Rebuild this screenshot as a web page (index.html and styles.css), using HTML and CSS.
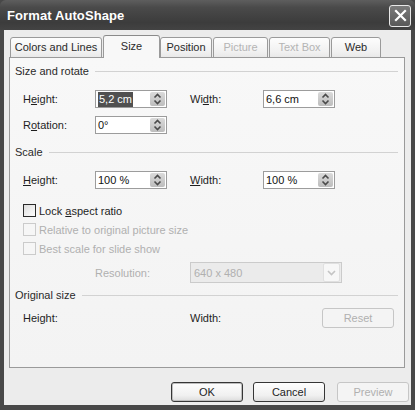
FILE: index.html
```html
<!doctype html>
<html>
<head>
<meta charset="UTF-8" />
<title>Format AutoShape</title>
<link rel="stylesheet" href="styles.css">
</head>
<body>
	<div class="window">
		<div class="titlebar">
			<span class="title">Format AutoShape</span>
			<span class="close">
				<svg width="13" height="13" viewBox="0 0 13 13"><path d="M2 2 L11 11 M11 2 L2 11" stroke="#fff" stroke-width="2.2" stroke-linecap="square"/></svg>
			</span>
		</div>
		<div class="body">
			<div class="tabs">
				<span class="tab tab-colors">Colors and Lines</span>
				<span class="tab tab-size active">Size</span>
				<span class="tab tab-position">Position</span>
				<span class="tab tab-picture disabled">Picture</span>
				<span class="tab tab-textbox disabled">Text Box</span>
				<span class="tab tab-web">Web</span>
			</div>
			<div class="panel">
				<div class="legend legend-rotate">Size and rotate</div>
				<div class="row row-first">
					<label>H<u>e</u>ight:</label>
					<div class="spin"><span class="value"><span class="sel">5,2 cm</span></span><span class="spin-btn"><svg width="9" height="14" viewBox="0 0 9 14"><path d="M1.5 5.5 L4.5 2.5 L7.5 5.5 M1.5 8.5 L4.5 11.5 L7.5 8.5" fill="none" stroke="#4a4a4a" stroke-width="1.6"/></svg></span></div>
					<label>Wi<u>d</u>th:</label>
					<div class="spin"><span class="value">6,6 cm</span><span class="spin-btn"><svg width="9" height="14" viewBox="0 0 9 14"><path d="M1.5 5.5 L4.5 2.5 L7.5 5.5 M1.5 8.5 L4.5 11.5 L7.5 8.5" fill="none" stroke="#4a4a4a" stroke-width="1.6"/></svg></span></div>
				</div>
				<div class="row row-second">
					<label>R<u>o</u>tation:</label>
					<div class="spin"><span class="value">0°</span><span class="spin-btn"><svg width="9" height="14" viewBox="0 0 9 14"><path d="M1.5 5.5 L4.5 2.5 L7.5 5.5 M1.5 8.5 L4.5 11.5 L7.5 8.5" fill="none" stroke="#4a4a4a" stroke-width="1.6"/></svg></span></div>
				</div>
				<div class="legend legend-scale">Scale</div>
				<div class="row row-scale">
					<label><u>H</u>eight:</label>
					<div class="spin"><span class="value">100 %</span><span class="spin-btn"><svg width="9" height="14" viewBox="0 0 9 14"><path d="M1.5 5.5 L4.5 2.5 L7.5 5.5 M1.5 8.5 L4.5 11.5 L7.5 8.5" fill="none" stroke="#4a4a4a" stroke-width="1.6"/></svg></span></div>
					<label><u>W</u>idth:</label>
					<div class="spin"><span class="value">100 %</span><span class="spin-btn"><svg width="9" height="14" viewBox="0 0 9 14"><path d="M1.5 5.5 L4.5 2.5 L7.5 5.5 M1.5 8.5 L4.5 11.5 L7.5 8.5" fill="none" stroke="#4a4a4a" stroke-width="1.6"/></svg></span></div>
				</div>
				<div class="check check-first"><span class="box"></span><span>Lock <u>a</u>spect ratio</span></div>
				<div class="check disabled"><span class="box"></span><span>Relative to original picture size</span></div>
				<div class="check disabled"><span class="box"></span><span>Best scale for slide show</span></div>
				<div class="row row-resolution">
					<span class="label-res">Resolution:</span>
					<div class="select"><span class="value">640 x 480</span><span class="drop"><svg width="9" height="6" viewBox="0 0 9 6"><path d="M1 1 L4.5 4.5 L8 1" fill="none" stroke="#c4c4c4" stroke-width="1.6"/></svg></span></div>
				</div>
				<div class="legend legend-original">Original size</div>
				<div class="row row-original">
					<label>Height:</label>
					<span></span>
					<label>Width:</label>
					<span class="button small disabled">Reset</span>
				</div>
			</div>
			<div class="buttons">
				<span class="button default">OK</span>
				<span class="button">Cancel</span>
				<span class="button disabled">Preview</span>
			</div>
		</div>
	</div>
</body>
</html>
```

FILE: styles.css
```css
html, body, div, span, label{
	margin:0;
	padding:0;
}
body{
	font: 11px "Liberation Sans", Arial, sans-serif;
	color:#1e1e1e;
	background:#4a4a4a;
}
u{
	text-decoration:underline;
	text-underline-offset:1px;
}
.window{
	width:415px;
	height:410px;
	box-sizing:border-box;
	padding:0 4px 5px 4px;
	background:#484848;
	display:flex;
	flex-direction:column;
}
.titlebar{
	height:30px;
	margin:0 -4px;
	padding:0 4px 0 7px;
	display:flex;
	align-items:center;
	justify-content:space-between;
	background:linear-gradient(#5e5e5e, #4a4a4a 25%, #3c3c3c 75%, #434343);
	border-radius:6px 6px 0 0;
}
.title{
	font-weight:bold;
	font-size:13px;
	color:#fff;
	letter-spacing:0.1px;
}
.close{
	width:20px;
	height:20px;
	margin-top:1px;
	border:1px solid #e8e8e8;
	border-radius:3px;
	background:linear-gradient(#7a7a7a, #595959);
	display:flex;
	align-items:center;
	justify-content:center;
}
.body{
	flex:1;
	background:#ececec;
	padding:5px 6px 0 5px;
}
.tabs{
	height:23px;
	margin-bottom:-1px;
	padding-left:1px;
	display:flex;
	align-items:flex-end;
	position:relative;
	z-index:1;
}
.tab{
	height:19px;
	line-height:19px;
	box-sizing:content-box;
	text-align:center;
	border:1px solid #9a9a9a;
	border-radius:3px 3px 0 0;
	background:linear-gradient(#fdfdfd, #f1f1f1 70%, #e9e9e9);
	margin-right:1px;
	color:#2a2a2a;
}
.tab.disabled{
	color:#b4b4b4;
}
.tab-colors{ width:90px; }
.tab-position{ width:50px; margin-left:1px; }
.tab-picture{ width:53px; }
.tab-textbox{ width:59px; }
.tab-web{ width:48px; }
.tab.active{
	width:55px;
	height:22px;
	line-height:21px;
	border-bottom:0;
	margin:0 -1px 0 0;
	background:#f8f8f8;
	border-top-color:#8a8a8a;
}
.panel{
	height:311px;
	box-sizing:border-box;
	border:1px solid #9a9a9a;
	background:linear-gradient(#f8f8f8, #f3f3f3);
	padding:0 6px 0 0;
}
.legend{
	height:14px;
	padding-left:5px;
	display:flex;
	align-items:center;
	gap:6px;
	color:#2a2a2a;
}
.legend:after{
	content:"";
	flex:1;
	height:1px;
	background:#d2d2d2;
}
.legend-rotate{ margin-top:6px; }
.legend-scale{ margin-top:11px; }
.legend-original{ margin-top:5px; }
.row{
	padding-left:13px;
	display:grid;
	grid-template-columns:72px 95px 73px 131px;
	align-items:center;
}
.row-first{ margin-top:12px; height:18px; }
.row-second{ margin-top:8px; height:18px; }
.row-scale{ margin-top:12px; height:18px; }
.row-resolution{ margin-top:4px; height:21px; }
.row-original{ margin-top:6px; height:20px; }
.spin{
	width:72px;
	height:18px;
	box-sizing:border-box;
	border:1px solid #9c9c9c;
	background:#fff;
	display:flex;
	align-items:center;
}
.spin .value{
	flex:1;
	padding-left:2px;
	color:#111;
}
.sel{
	background:#505050;
	color:#fff;
	padding:1px 1px 2px;
}
.spin-btn{
	width:15px;
	height:14px;
	margin-right:1px;
	border-radius:2px;
	background:linear-gradient(#dadada, #bdbdbd);
	display:flex;
	align-items:center;
	justify-content:center;
}
.check{
	height:19px;
	padding-left:13px;
	display:flex;
	align-items:center;
	gap:3px;
}
.check-first{ margin-top:12px; }
.box{
	width:13px;
	height:13px;
	box-sizing:border-box;
	border:1px solid #2a2a2a;
	background:linear-gradient(135deg, #dedede, #fdfdfd);
}
.check.disabled{
	color:#b0b0b0;
}
.check.disabled .box{
	border-color:#cbcbcb;
	background:#f6f6f6;
}
.label-res{
	grid-column:2;
	color:#b0b0b0;
}
.select{
	grid-column:3 / span 2;
	width:152px;
	height:21px;
	box-sizing:border-box;
	border:1px solid #cbcbcb;
	background:#ebebeb;
	display:flex;
	align-items:center;
	color:#b0b0b0;
}
.select .value{
	flex:1;
	padding-left:3px;
}
.drop{
	width:15px;
	height:17px;
	margin-right:1px;
	border:1px solid #e0e0e0;
	border-radius:2px;
	background:#f7f7f7;
	display:flex;
	align-items:center;
	justify-content:center;
}
.button{
	width:72px;
	height:20px;
	box-sizing:border-box;
	border:1px solid #363636;
	border-radius:3px;
	background:linear-gradient(#fefefe, #f0f0f0 70%, #dcdcdc);
	display:flex;
	align-items:center;
	justify-content:center;
	color:#1e1e1e;
}
.button.default{
	box-shadow:inset 0 0 0 1px #bdbdbd;
}
.button.disabled{
	border-color:#c6c6c6;
	background:#f4f4f4;
	color:#b0b0b0;
}
.button.small{
	justify-self:end;
}
.buttons{
	margin-top:14px;
	margin-right:-4px;
	display:flex;
	justify-content:flex-end;
	gap:10px;
}
.buttons .button:nth-child(2){
	margin-right:2px;
}
```
